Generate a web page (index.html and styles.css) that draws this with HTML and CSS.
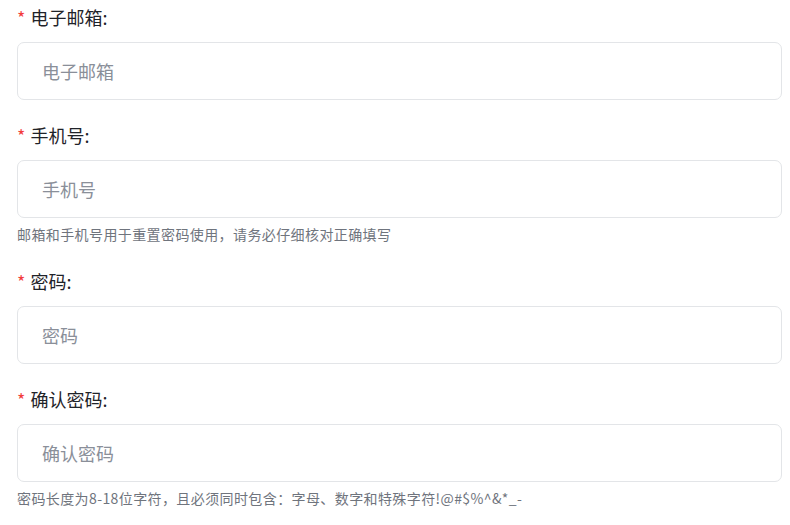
FILE: index.html
```html
<!DOCTYPE html>
<html lang="zh-CN">
  <head>
    <meta charset="UTF-8" />
    <meta name="viewport" content="width=device-width, initial-scale=1.0" />
    <title>注册</title>
    <link rel="stylesheet" href="styles.css">
  </head>
  <body>
    <form class="form">
      <div class="form-item">
        <label class="form-label" for="email"><span class="req">*</span>电子邮箱:</label>
        <input class="form-input" id="email" type="text" placeholder="电子邮箱" />
      </div>

      <div class="form-item">
        <label class="form-label" for="phone"><span class="req">*</span>手机号:</label>
        <input class="form-input" id="phone" type="text" placeholder="手机号" />
        <p class="form-help">邮箱和手机号用于重置密码使用，请务必仔细核对正确填写</p>
      </div>

      <div class="form-item">
        <label class="form-label" for="pwd"><span class="req">*</span>密码:</label>
        <input class="form-input" id="pwd" type="text" placeholder="密码" />
      </div>

      <div class="form-item">
        <label class="form-label" for="pwd2"><span class="req">*</span>确认密码:</label>
        <input class="form-input" id="pwd2" type="text" placeholder="确认密码" />
        <p class="form-help">密码长度为8-18位字符，且必须同时包含：字母、数字和特殊字符!@#$%^&amp;*_-</p>
      </div>
    </form>
  </body>
</html>
```

FILE: styles.css
```css
body {
  margin: 0;
  padding: 0;
  background: #ffffff;
  font-family: "Noto Sans CJK SC", "Liberation Sans", sans-serif;
}

.form {
  padding: 5px 8px 0 17px;
}

.form-item {
  display: flex;
  flex-direction: column;
  margin-bottom: 23px;
}

.form-label {
  font-size: 18px;
  line-height: 24px;
  color: #1f2329;
  margin-bottom: 13px;
}

.req {
  color: #f23d3d;
  margin-right: 5px;
}

.form-input {
  box-sizing: border-box;
  width: 100%;
  height: 58px;
  padding: 0 24px;
  border: 1px solid #e3e5e8;
  border-radius: 7px;
  font-family: inherit;
  font-size: 18px;
  color: #1f2329;
  outline: none;
}

.form-input::placeholder {
  color: #8a8f99;
}

.form-help {
  margin: 6px 0 2px;
  font-size: 14px;
  line-height: 20px;
  letter-spacing: 0.4px;
  color: #6f747d;
}
```
